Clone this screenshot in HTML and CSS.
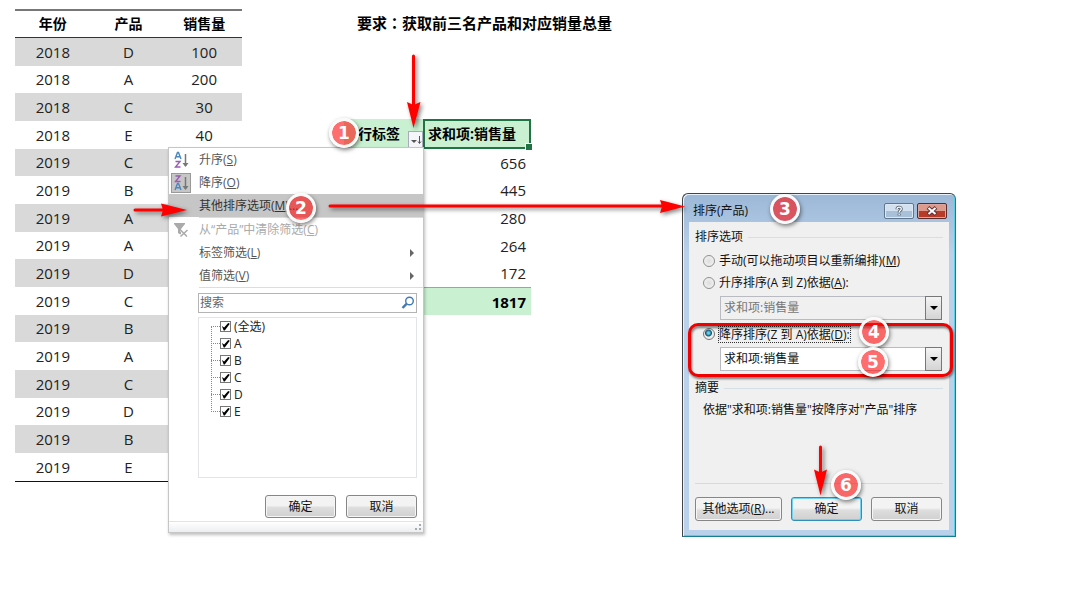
FILE: index.html
```html
<!DOCTYPE html>
<html lang="zh-CN">
<head>
<meta charset="utf-8">
<title>获取前三名产品和对应销量总量</title>
<link rel="stylesheet" href="styles.css">
</head>
<body>
<main class="sheet">
  <table class="data">
    <thead><tr><th scope="col">年份</th><th scope="col">产品</th><th scope="col">销售量</th></tr></thead>
    <tbody>
      <tr><td>2018</td><td>D</td><td>100</td></tr>
      <tr><td>2018</td><td>A</td><td>200</td></tr>
      <tr><td>2018</td><td>C</td><td>30</td></tr>
      <tr><td>2018</td><td>E</td><td>40</td></tr>
      <tr><td>2019</td><td>C</td><td></td></tr>
      <tr><td>2019</td><td>B</td><td></td></tr>
      <tr><td>2019</td><td>A</td><td></td></tr>
      <tr><td>2019</td><td>A</td><td></td></tr>
      <tr><td>2019</td><td>D</td><td></td></tr>
      <tr><td>2019</td><td>C</td><td></td></tr>
      <tr><td>2019</td><td>B</td><td></td></tr>
      <tr><td>2019</td><td>A</td><td></td></tr>
      <tr><td>2019</td><td>C</td><td></td></tr>
      <tr><td>2019</td><td>D</td><td></td></tr>
      <tr><td>2019</td><td>B</td><td></td></tr>
      <tr><td>2019</td><td>E</td><td></td></tr>
    </tbody>
  </table>

  <section class="summary">
    <h1 class="task">要求<span class="colon" lang="zh-TW">：</span>获取前三名产品和对应销量总量</h1>
    <table class="pivot">
      <thead><tr>
        <th scope="col" class="row-label"><div class="label-cell"><span>行标签</span>
          <button class="filter" type="button" aria-label="筛选"><svg width="14" height="15" viewBox="0 0 14 15"><path d="M2 8h6l-3 3z" fill="#555"/><path d="M10.500 4v7M9 9.500l1.500 2 1.500-2" fill="none" stroke="#555"/></svg></button></div></th>
        <th scope="col" class="selected">求和项:销售量</th>
      </tr></thead>
      <tbody>
        <tr><td></td><td>656</td></tr>
        <tr><td></td><td>445</td></tr>
        <tr><td></td><td>280</td></tr>
        <tr><td></td><td>264</td></tr>
        <tr><td></td><td>172</td></tr>
      </tbody>
      <tfoot><tr><td></td><td>1817</td></tr></tfoot>
    </table>
  </section>

  <section class="menu">
    <button class="item" type="button"><span class="icon"><svg width="18" height="18" viewBox="0 0 18 18" fill="none"><path d="M3 8l2.500-6.500h1L9 8M4 5.700h4" stroke="#4a86c0" stroke-width="1.400"/><path d="M3.500 10.500h4.500L3.500 16h5" stroke="#9a5bb5" stroke-width="1.400"/><path d="M13.500 3v12" stroke="#777" stroke-width="1.500"/><path d="M10.500 12h6l-3 4z" fill="#777"/></svg></span><span>升序(<u>S</u>)</span></button>
    <button class="item" type="button"><span class="icon pressed"><svg width="18" height="18" viewBox="0 0 18 18" fill="none"><path d="M3.500 2H8L3.500 7.500h5" stroke="#9a5bb5" stroke-width="1.400"/><path d="M3 16l2.500-6.500h1L9 16M4 13.700h4" stroke="#4a86c0" stroke-width="1.400"/><path d="M13.500 3v12" stroke="#777" stroke-width="1.500"/><path d="M10.500 12h6l-3 4z" fill="#777"/></svg></span><span>降序(<u>O</u>)</span></button>
    <button class="item active" type="button"><span class="icon"></span><span>其他排序选项(<u>M</u>)...</span></button>
    <hr class="rule">
    <button class="item" type="button" disabled><span class="icon"><svg width="18" height="18" viewBox="0 0 18 18" fill="none"><path d="M2 2h11v1L9 8v6L6 12V8L2 3z" fill="#aaa"/><path d="M9 9l6 6M15 9l-6 6" stroke="#fff" stroke-width="3"/><path d="M8.500 9l6.500 6.500M15.500 9l-7 6.500" stroke="#aaa" stroke-width="1.500"/></svg></span><span>从“产品”中清除筛选(<u>C</u>)</span></button>
    <button class="item" type="button"><span class="icon"></span><span>标签筛选(<u>L</u>)</span><i class="more"></i></button>
    <button class="item" type="button"><span class="icon"></span><span>值筛选(<u>V</u>)</span><i class="more"></i></button>
    <hr class="rule">
    <div class="panel">
      <div class="search"><input type="text" placeholder="搜索" aria-label="搜索"><svg width="14" height="14" viewBox="0 0 14 14" fill="none" stroke="#4279b5"><circle cx="8.500" cy="5" r="3.800" stroke-width="1.400"/><path d="M5.500 7.800L1.500 12" stroke-width="2.400"/></svg></div>
      <div class="tree">
        <label><input type="checkbox" checked>(全选)</label>
        <label><input type="checkbox" checked>A</label>
        <label><input type="checkbox" checked>B</label>
        <label><input type="checkbox" checked>C</label>
        <label><input type="checkbox" checked>D</label>
        <label><input type="checkbox" checked>E</label>
      </div>
      <div class="actions"><button class="btn" type="button">确定</button><button class="btn" type="button">取消</button></div>
    </div>
    <div class="grip"><svg width="8" height="8" viewBox="0 0 8 8" fill="#aaa"><path d="M4 0h2v2H4zM0 4h2v2H0zM4 4h2v2H4z"/></svg></div>
  </section>

  <section class="dialog" role="dialog" aria-labelledby="dialog-title">
    <header class="titlebar">
      <h2 id="dialog-title">排序(产品)</h2>
      <button class="caption" type="button" aria-label="帮助"><svg width="12" height="12" viewBox="0 0 12 12" fill="none"><path d="M4 4.200C4 1.500 8.300 1.500 8.300 4c0 1.600-2.200 1.500-2.200 3.500M6.100 8.800v1.700" stroke="#52606e" stroke-width="3"/><path d="M4 4.200C4 1.500 8.300 1.500 8.300 4c0 1.600-2.200 1.500-2.200 3.500M6.100 9v1.300" stroke="#fff" stroke-width="1.300"/></svg></button>
      <button class="caption close" type="button" aria-label="关闭"><svg width="12" height="10" viewBox="0 0 12 10" fill="none"><path d="M2 1.500l8 7M10 1.500l-8 7" stroke="#643036" stroke-width="4"/><path d="M2.500 2l7 6M9.500 2l-7 6" stroke="#fff" stroke-width="2"/></svg></button>
    </header>
    <form class="content">
      <h3 class="group">排序选项</h3>
      <div class="options">
        <label class="choice"><input type="radio" name="sort"><span>手动(可以拖动项目以重新编排)(<u>M</u>)</span></label>
        <label class="choice"><input type="radio" name="sort"><span>升序排序(A 到 Z)依据(<u>A</u>):</span></label>
        <div class="combo"><select disabled aria-label="升序排序依据"><option>求和项:销售量</option></select><span class="drop"></span></div>
        <label class="choice"><input type="radio" name="sort" checked><span class="focus">降序排序(Z 到 A)依据(<u>D</u>):</span></label>
        <div class="combo"><select aria-label="降序排序依据"><option>求和项:销售量</option></select><span class="drop"></span></div>
      </div>
      <h3 class="group">摘要</h3>
      <p class="note">依据"求和项:销售量"按降序对"产品"排序</p>
      <div class="buttons"><button class="btn wide" type="button">其他选项(<u>R</u>)...</button><button class="btn default" type="button">确定</button><button class="btn" type="button">取消</button></div>
    </form>
  </section>

  <div class="frame"></div>
  <svg class="arrows" width="1080" height="594" viewBox="0 0 1080 594" fill="#f00" stroke="#f00" stroke-linecap="round">
    <path d="M413.500 56v50M135 210h34M330 206h335M820.500 447v30" stroke-width="3"/>
    <path stroke="none" d="M407 102l6.500 3 7-3-7 26zM161 203.500l26 6.500-26 6.500 2-6.500zM660 200l25 6.500-25 6.500 2-6.500zM814 469.500l6.500 3 6.500-3-6.500 26z"/>
  </svg>
  <span class="badge b1">1</span>
  <span class="badge b2">2</span>
  <span class="badge b3">3</span>
  <span class="badge b4">4</span>
  <span class="badge b5">5</span>
  <span class="badge b6">6</span>
</main>
</body>
</html>
```

FILE: styles.css
```css
* { box-sizing: border-box; }
body {
  margin: 0;
  background: #fff;
  color: #111;
  font: 12px/16px "Open Sans", "Noto Sans CJK SC", sans-serif;
}
button, input, select { font: inherit; color: inherit; margin: 0; }
h1, h2, h3, p, hr { margin: 0; font-weight: normal; }
table { border-collapse: separate; border-spacing: 0; table-layout: fixed; font-size: 15px; line-height: 20px; }
td, th { padding: 0; }
th { font-size: 14px; }

.sheet {
  position: relative;
  display: flex;
  align-items: flex-start;
  gap: 102px;
  min-height: 100vh;
  padding: 9px 15px;
  overflow: hidden;
}

/* Source data */
.data { width: 227px; height: 473px; text-align: center; color: #222; }
.data th { height: 29px; color: #000; border-top: 2px solid #777; border-bottom: 1px solid #333; }
.data tbody tr:nth-child(odd) { background: #d9d9d9; }
.data tbody tr:last-child td { border-bottom: 1px solid #111; }

/* Pivot summary */
.summary { width: 187px; }
.task { margin: 4px 0 0 13px; color: #000; font-size: 15px; line-height: 20px; font-weight: bold; white-space: nowrap; }
.colon { font-family: "Noto Sans CJK TC", sans-serif; line-height: 16px; }
.pivot { width: 187px; height: 196px; margin-top: 86px; text-align: right; color: #222; }
.pivot th { height: 30px; color: #000; background: #c9f1d1; }
.row-label { width: 79px; }
.label-cell { display: flex; justify-content: flex-end; align-items: center; gap: 8px; height: 30px; white-space: nowrap; }
.filter { align-self: flex-end; width: 15px; height: 17px; margin-bottom: 1px; padding: 0; border: 1px solid #aab; background: #f5f6fa; line-height: 0; }
.pivot .selected { position: relative; border: 2px solid #217346; padding-left: 3px; text-align: left; white-space: nowrap; }
.selected::after { content: ""; position: absolute; right: -3px; bottom: -3px; width: 6px; height: 6px; background: #217346; border: 1px solid #fff; border-width: 1px 0 0 1px; }
.pivot td { padding-right: 5px; }
.pivot tfoot td { height: 28px; background: #c9f1d1; border-top: 1px solid #63c77d; color: #000; font-weight: bold; }

/* Filter menu */
.menu {
  position: absolute;
  left: 168px;
  top: 147px;
  width: 256px;
  display: flex;
  flex-direction: column;
  background: #fff;
  border: 1px solid #c6c6c6;
  box-shadow: 1px 2px 3px rgba(0, 0, 0, .25);
  color: #555;
}
.item { display: flex; align-items: center; gap: 8px; height: 23px; padding: 0 9px 0 2px; border: 0; background: none; white-space: nowrap; }
.item.active { background: #c6c6c6; color: #333; }
.item:disabled { color: #aaa; }
.icon { display: flex; align-items: center; justify-content: center; width: 20px; height: 20px; }
.icon.pressed { background: #c6c6c6; border: 1px solid #999; }
.more { margin-left: auto; border: 4px solid transparent; border-left-color: #666; border-right: 0; }
.rule { height: 1px; margin-left: 30px; border: 0; background: #ddd; }
.panel { display: flex; flex-direction: column; gap: 4px; padding: 5px 6px 3px 29px; }
.search { display: flex; align-items: center; height: 20px; padding-right: 1px; border: 1px solid #b4b4b4; }
.search input { flex: 1; min-width: 0; height: 16px; padding: 0 1px; border: 0; outline: 0; background: none; }
.search input::placeholder { color: #666; }
.tree { position: relative; min-height: 161px; border: 1px solid #e2e4e8; padding-left: 12px; color: #222; }
.tree::before { content: ""; position: absolute; left: 12px; top: 9px; height: 85px; border-left: 1px dotted #888; }
.tree label { display: flex; align-items: center; height: 17px; }
.tree label::before { content: ""; width: 9px; border-top: 1px dotted #888; }
.tree input { appearance: none; display: grid; width: 11px; height: 11px; margin-right: 3px; border: 1px solid #777; background: #fff; }
.tree input::before { content: ""; background: #000; clip-path: polygon(10% 45%, 35% 60%, 80% 10%, 98% 20%, 42% 95%, 30% 95%); }
.actions { display: flex; justify-content: flex-end; gap: 10px; margin-top: 13px; }
.btn {
  width: 71px;
  height: 24px;
  padding: 0;
  border: 1px solid #868686;
  border-radius: 3px;
  background: linear-gradient(#f3f3f3 0 45%, #dedede 55%, #d0d0d0);
  box-shadow: inset 0 0 0 1px #f6f6f6;
  color: #111;
}
.actions .btn { height: 23px; }
.grip { display: flex; justify-content: flex-end; align-items: flex-end; height: 11px; border-top: 1px solid #dce5ef; background: linear-gradient(#fff, #eceef0); }

/* Sort dialog */
.dialog {
  position: absolute;
  left: 682px;
  top: 193px;
  width: 274px;
  padding: 0 6px 6px;
  border: 1px solid #444;
  border-right-color: #157f91;
  border-bottom-color: #157f91;
  border-radius: 6px 6px 0 0;
  background: linear-gradient(#9cb8d7, #b9d1ea 60px);
  box-shadow: inset 1px 1px #e8f2fb, inset -1px -1px #59cfe6;
}
.titlebar { display: flex; align-items: center; gap: 3px; height: 28px; padding: 6px 2px 0 4px; }
.titlebar h2 { flex: 1; font-size: 12px; line-height: 16px; }
.caption { display: flex; align-items: center; justify-content: center; width: 30px; height: 16px; padding: 0; border: 1px solid #60768e; border-radius: 2px; background: linear-gradient(#d2e0ef 50%, #a9c0d9 50%); box-shadow: inset 0 0 0 1px #dce8f4; }
.caption.close { border-color: #5b2b2b; background: linear-gradient(#dc9a8c 50%, #b83b28 50%); box-shadow: inset 0 0 0 1px #dca49a; }
.content { display: flex; flex-direction: column; padding: 7px 6px 9px; background: #f0f0f0; }
.group { display: flex; align-items: center; gap: 5px; font-size: 12px; line-height: 16px; }
.group::after { content: ""; flex: 1; border-top: 1px solid #d5dfe5; }
.options { padding: 5px 0 6px 8px; }
.choice { display: flex; align-items: center; gap: 4px; height: 22px; white-space: nowrap; }
.choice input { appearance: none; width: 12px; height: 12px; border: 1px solid #8e8f8f; border-radius: 50%; background: radial-gradient(#ddd, #f8f8f8); }
.choice input:checked { border-color: #777; background: radial-gradient(circle at 45% 40%, #5fd0f0 0 1px, #17526f 3px, #eee 4px); }
.focus { outline: 1px dotted #333; line-height: 15px; }
.combo { position: relative; display: flex; height: 24px; margin: 2px 1px 3px 17px; }
.combo select { flex: 1; appearance: none; padding: 0 3px; border: 1px solid #b8bcc2; border-radius: 0; background: #fff; opacity: 1; }
.combo select:disabled { background: #f0f0f0; color: #777; }
.drop { position: absolute; right: 0; top: 0; width: 17px; height: 24px; border: 1px solid #777; background: linear-gradient(#f4f4f4, #d4d4d4); display: grid; place-items: center; pointer-events: none; }
.drop::before { content: ""; border: 4px solid transparent; border-top-color: #000; border-bottom: 0; }
.note { margin: 6px 0 0 8px; white-space: nowrap; }
.buttons { display: flex; justify-content: space-between; margin-top: 65px; padding: 13px 1px 0 0; border-top: 1px solid #cfdbe5; }
.btn.wide { width: 87px; }
.btn.default { border-color: #2f8fb8; box-shadow: inset 0 0 0 1px #72d2f2; }

/* Annotations */
.frame { position: absolute; left: 688px; top: 323px; width: 265px; height: 54px; border: 3px solid #f00000; border-radius: 10px; filter: drop-shadow(1px 2px 1px rgba(0, 0, 0, .5)); }
.arrows { position: absolute; left: 0; top: 0; pointer-events: none; filter: drop-shadow(2px 2px 2px rgba(0, 0, 0, .5)); }
.badge {
  position: absolute;
  width: 30px;
  height: 30px;
  border: 3px solid #fafafa;
  border-radius: 50%;
  background: rgba(255, 13, 13, .6) padding-box;
  box-shadow: 1px 2px 4px rgba(0, 0, 0, .5);
  color: #fff;
  font: bold 17px/24px "DejaVu Sans", sans-serif;
  text-align: center;
}
.b1 { left: 329px; top: 118px; }
.b2 { left: 286px; top: 193px; }
.b3 { left: 770px; top: 194px; }
.b4 { left: 859px; top: 317px; }
.b5 { left: 858px; top: 347px; }
.b6 { left: 831px; top: 470px; }
```
